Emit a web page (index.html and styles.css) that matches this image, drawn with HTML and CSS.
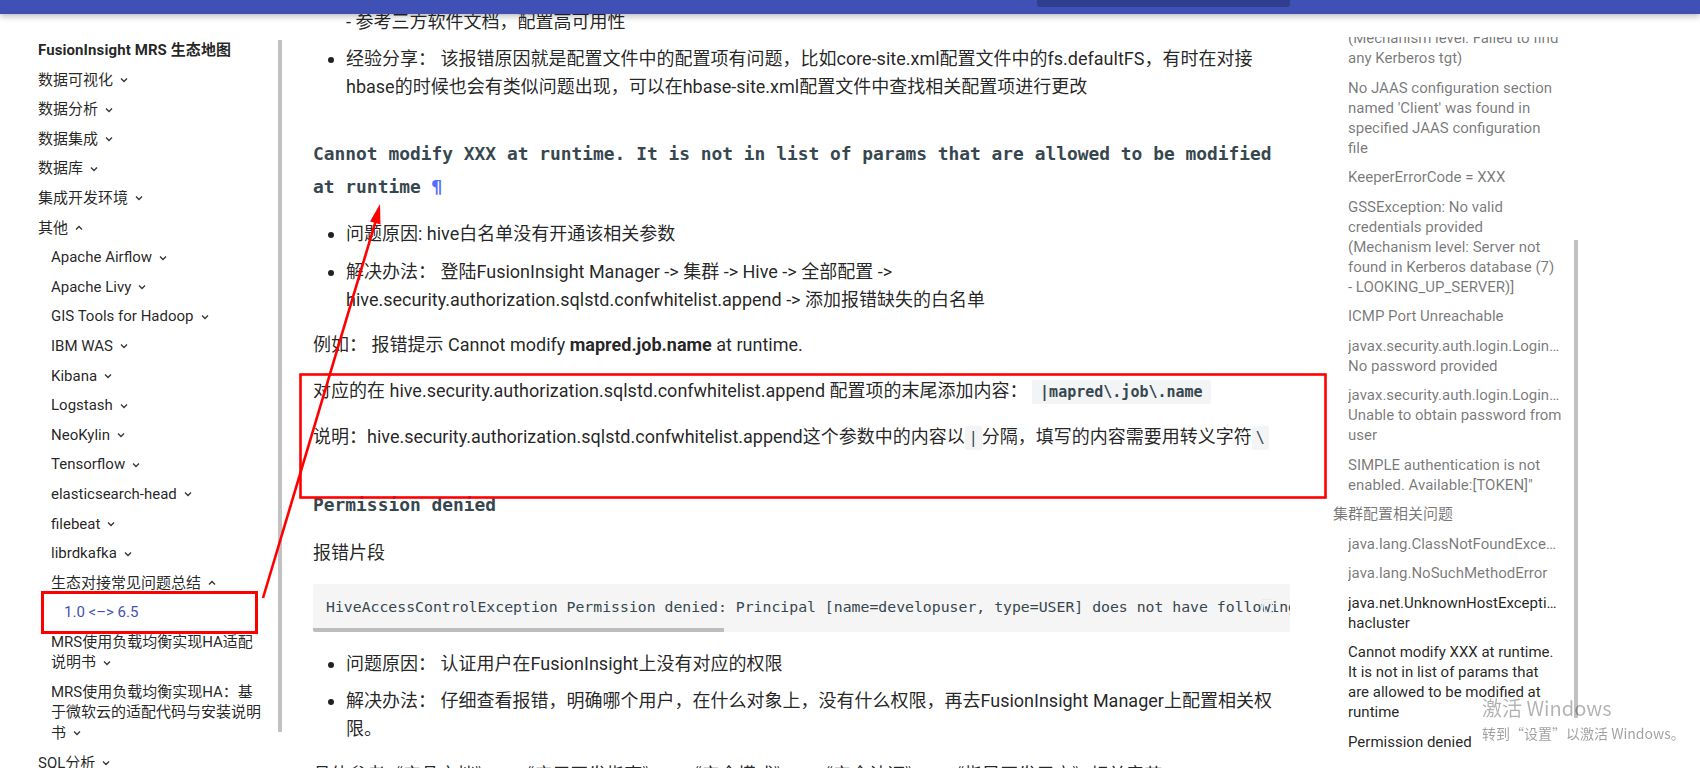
FILE: index.html
```html
<!DOCTYPE html>
<html lang="zh-CN">
<head>
<meta charset="utf-8">
<title>FusionInsight MRS 生态地图</title>
<link rel="stylesheet" href="styles.css">
</head>
<body>
<header class="header"><div class="search"></div></header>

<div class="layout">
  <aside class="sidebar">
    <nav class="nav">
      <div class="nav-title">FusionInsight MRS 生态地图</div>
      <ul class="nav-list">
        <li>数据可视化<svg class="chev" viewBox="0 0 10 10"><polyline points="2,3.5 5,6.5 8,3.5"/></svg></li>
        <li>数据分析<svg class="chev" viewBox="0 0 10 10"><polyline points="2,3.5 5,6.5 8,3.5"/></svg></li>
        <li>数据集成<svg class="chev" viewBox="0 0 10 10"><polyline points="2,3.5 5,6.5 8,3.5"/></svg></li>
        <li>数据库<svg class="chev" viewBox="0 0 10 10"><polyline points="2,3.5 5,6.5 8,3.5"/></svg></li>
        <li>集成开发环境<svg class="chev" viewBox="0 0 10 10"><polyline points="2,3.5 5,6.5 8,3.5"/></svg></li>
        <li>其他<svg class="chev" viewBox="0 0 10 10"><polyline points="2,6.5 5,3.5 8,6.5"/></svg>
          <ul class="nav-list nav-sub">
            <li>Apache Airflow<svg class="chev" viewBox="0 0 10 10"><polyline points="2,3.5 5,6.5 8,3.5"/></svg></li>
            <li>Apache Livy<svg class="chev" viewBox="0 0 10 10"><polyline points="2,3.5 5,6.5 8,3.5"/></svg></li>
            <li>GIS Tools for Hadoop<svg class="chev" viewBox="0 0 10 10"><polyline points="2,3.5 5,6.5 8,3.5"/></svg></li>
            <li>IBM WAS<svg class="chev" viewBox="0 0 10 10"><polyline points="2,3.5 5,6.5 8,3.5"/></svg></li>
            <li>Kibana<svg class="chev" viewBox="0 0 10 10"><polyline points="2,3.5 5,6.5 8,3.5"/></svg></li>
            <li>Logstash<svg class="chev" viewBox="0 0 10 10"><polyline points="2,3.5 5,6.5 8,3.5"/></svg></li>
            <li>NeoKylin<svg class="chev" viewBox="0 0 10 10"><polyline points="2,3.5 5,6.5 8,3.5"/></svg></li>
            <li>Tensorflow<svg class="chev" viewBox="0 0 10 10"><polyline points="2,3.5 5,6.5 8,3.5"/></svg></li>
            <li>elasticsearch-head<svg class="chev" viewBox="0 0 10 10"><polyline points="2,3.5 5,6.5 8,3.5"/></svg></li>
            <li>filebeat<svg class="chev" viewBox="0 0 10 10"><polyline points="2,3.5 5,6.5 8,3.5"/></svg></li>
            <li>librdkafka<svg class="chev" viewBox="0 0 10 10"><polyline points="2,3.5 5,6.5 8,3.5"/></svg></li>
            <li>生态对接常见问题总结<svg class="chev" viewBox="0 0 10 10"><polyline points="2,6.5 5,3.5 8,6.5"/></svg>
              <ul class="nav-list nav-sub">
                <li class="active">1.0 &lt;–&gt; 6.5</li>
              </ul>
            </li>
            <li>MRS使用负载均衡实现HA适配说明书<svg class="chev" viewBox="0 0 10 10"><polyline points="2,3.5 5,6.5 8,3.5"/></svg></li>
            <li>MRS使用负载均衡实现HA：基于微软云的适配代码与安装说明书<svg class="chev" viewBox="0 0 10 10"><polyline points="2,3.5 5,6.5 8,3.5"/></svg></li>
          </ul>
        </li>
        <li>SQL分析<svg class="chev" viewBox="0 0 10 10"><polyline points="2,3.5 5,6.5 8,3.5"/></svg></li>
      </ul>
    </nav>
    <div class="nav-thumb"></div>
  </aside>

  <main class="content">
    <ul class="list first">
      <li class="cont">- 参考三方软件文档，配置高可用性</li>
      <li>经验分享： 该报错原因就是配置文件中的配置项有问题，比如core-site.xml配置文件中的fs.defaultFS，有时在对接hbase的时候也会有类似问题出现，可以在hbase-site.xml配置文件中查找相关配置项进行更改</li>
    </ul>

    <h3 class="heading">Cannot modify XXX at runtime. It is not in list of params that are allowed to be modified at runtime <span class="pilcrow">¶</span></h3>

    <ul class="list">
      <li>问题原因: hive白名单没有开通该相关参数</li>
      <li>解决办法： 登陆FusionInsight Manager -&gt; 集群 -&gt; Hive -&gt; 全部配置 -&gt; hive.security.authorization.sqlstd.confwhitelist.append -&gt; 添加报错缺失的白名单</li>
    </ul>

    <p>例如： 报错提示 Cannot modify <strong>mapred.job.name</strong> at runtime.</p>
    <p>对应的在 hive.security.authorization.sqlstd.confwhitelist.append 配置项的末尾添加内容： <code class="code-wide">|mapred\.job\.name</code></p>
    <p>说明：hive.security.authorization.sqlstd.confwhitelist.append这个参数中的内容以<code>|</code>分隔，填写的内容需要用转义字符<code>\</code></p>

    <h3 class="heading">Permission denied</h3>

    <p>报错片段</p>
    <pre class="codeblock">HiveAccessControlException Permission denied: Principal [name=developuser, type=USER] does not have following privileges for operation QUERY [[SELECT] on Object [type=TABLE_OR_VIEW, name=default.t1]]<svg class="copy" viewBox="0 0 16 16"><rect x="4.5" y="4.5" width="9" height="10"/><path d="M2.5 11.5V1.5h9"/></svg></pre>

    <ul class="list">
      <li>问题原因： 认证用户在FusionInsight上没有对应的权限</li>
      <li>解决办法： 仔细查看报错，明确哪个用户，在什么对象上，没有什么权限，再去FusionInsight Manager上配置相关权限。</li>
    </ul>

    <p>具体参考《产品文档》 -&gt; 《应用开发指南》 -&gt; 《安全模式》 -&gt; 《安全认证》 -&gt; 《指导开发用户》相关章节</p>
  </main>

  <aside class="toc">
    <ul class="toc-list toc-top">
      <li class="toc-cat">
        <ul class="toc-list toc-sub">
          <li><a class="passed">GSSException: No valid credentials provided (Mechanism level: Failed to find any Kerberos tgt)</a></li>
          <li><a class="passed">No JAAS configuration section named 'Client' was found in specified JAAS configuration file</a></li>
          <li><a class="passed">KeeperErrorCode = XXX</a></li>
          <li><a class="passed">GSSException: No valid credentials provided (Mechanism level: Server not found in Kerberos database (7) - LOOKING_UP_SERVER)]</a></li>
          <li><a class="passed">ICMP Port Unreachable</a></li>
          <li><a class="passed">javax.security.auth.login.LoginException: No password provided</a></li>
          <li><a class="passed">javax.security.auth.login.LoginException: Unable to obtain password from user</a></li>
          <li><a class="passed">SIMPLE authentication is not enabled. Available:[TOKEN]"</a></li>
        </ul>
      </li>
      <li class="toc-cat"><a class="passed">集群配置相关问题</a>
        <ul class="toc-list toc-sub">
          <li><a class="passed">java.lang.ClassNotFoundException</a></li>
          <li><a class="passed">java.lang.NoSuchMethodError</a></li>
          <li><a>java.net.UnknownHostException: hacluster</a></li>
          <li><a>Cannot modify XXX at runtime. It is not in list of params that are allowed to be modified at runtime</a></li>
          <li><a>Permission denied</a></li>
        </ul>
      </li>
    </ul>
    <div class="toc-thumb"></div>
  </aside>
</div>

<div class="watermark">
  <div class="wm-title">激活 Windows</div>
  <div class="wm-sub">转到“设置”以激活 Windows。</div>
</div>

<svg class="annot" width="1700" height="768" viewBox="0 0 1700 768">
  <rect x="42.5" y="592.5" width="214" height="40" fill="none" stroke="#ff0000" stroke-width="3"/>
  <rect x="300.5" y="374.5" width="1025" height="123" fill="none" stroke="#ff0000" stroke-width="2.6"/>
  <line x1="263" y1="598" x2="376" y2="220" stroke="#ff0000" stroke-width="2.6"/>
  <polygon points="380,204 380.5,224.5 370,221.5" fill="#ff0000"/>
</svg>
</body>
</html>
```

FILE: styles.css
```css
* { box-sizing: border-box; }

body {
  margin: 0;
  font-family: Roboto, "Noto Sans CJK SC", sans-serif;
  color: rgba(0, 0, 0, 0.87);
  background: #fff;
  overflow: hidden;
  height: 768px;
}

/* ---------- header ---------- */
.header {
  position: fixed;
  top: 0;
  left: 0;
  right: 0;
  height: 14px;
  background: #3f51b5;
  box-shadow: 0 0 3px rgba(0, 0, 0, 0.1), 0 3px 6px rgba(0, 0, 0, 0.22);
  z-index: 10;
}
.search {
  position: absolute;
  left: 1037px;
  top: 0;
  width: 253px;
  height: 7px;
  background: #303e8e;
  border-radius: 0 0 3px 3px;
}

/* ---------- layout ---------- */
.layout {
  display: flex;
  height: 768px;
}

/* ---------- left nav ---------- */
.sidebar {
  position: relative;
  flex: none;
  width: 283px;
  height: 768px;
  overflow: hidden;
  padding-top: 40px;
}
.nav {
  margin-left: 38px;
  width: 225px;
  font-size: 15px;
  line-height: 20.5px;
  color: rgba(0, 0, 0, 0.87);
}
.nav-title {
  font-weight: 700;
  letter-spacing: 0.1px;
}
.nav-list {
  list-style: none;
  margin: 0;
  padding: 0;
}
.nav-list li {
  margin-top: 9.1px;
}
.nav-sub {
  padding-left: 13px;
}
.nav-list li.active {
  color: #3f51b5;
}
.chev {
  width: 10px;
  height: 10px;
  margin-left: 6px;
  vertical-align: -0.5px;
  fill: none;
  stroke: #333;
  stroke-width: 1.3;
}
.nav-thumb {
  position: absolute;
  left: 278px;
  top: 40px;
  width: 4px;
  height: 692px;
  background: #c1c1c1;
}

/* ---------- content ---------- */
.content {
  flex: none;
  width: 977px;
  margin-left: 30px;
  padding-top: 8px;
  font-size: 18px;
  line-height: 28px;
}
.list {
  margin: 17.6px 0;
  padding-left: 33px;
}
.list.first {
  margin-top: 0;
}
.list li {
  margin-top: 9.3px;
}
.list li:first-child {
  margin-top: 0;
}
.list li.cont {
  list-style: none;
}
.content p {
  margin: 17.6px 0;
}
.heading {
  margin: 35.5px 0 17.6px;
  font-family: "DejaVu Sans Mono", monospace;
  font-size: 17.9px;
  font-weight: 700;
  line-height: 33px;
  color: #37474f;
}
.pilcrow {
  color: #536dfe;
}
code {
  font-family: "DejaVu Sans Mono", monospace;
  font-size: 15px;
  color: #37474f;
  background: #f3f4f5;
  padding: 3px 4px;
  border-radius: 2px;
}
.code-wide {
  padding: 3px 8px;
  font-weight: 700;
}
.codeblock {
  position: relative;
  margin: 17px 0;
  padding: 12px 13px 14px;
  background: #f5f5f5;
  font-family: "DejaVu Sans Mono", monospace;
  font-size: 14.8px;
  line-height: 22px;
  color: #37474f;
  white-space: pre;
  overflow: hidden;
  border-radius: 2px;
}
.codeblock::after {
  content: "";
  position: absolute;
  left: 0;
  bottom: 0;
  width: 411px;
  height: 4px;
  background: #bdbdbd;
}
.copy {
  position: absolute;
  right: 14px;
  top: 14px;
  width: 16px;
  height: 16px;
  fill: none;
  stroke: #ebebeb;
  stroke-width: 1.2;
}

/* ---------- toc ---------- */
.toc {
  position: relative;
  flex: none;
  width: 250px;
  margin-left: 43px;
  margin-top: 37px;
  height: 731px;
  overflow: hidden;
  font-size: 15px;
  line-height: 20px;
}
.toc-list {
  list-style: none;
  margin: 0;
  padding: 0;
}
.toc-top {
  margin-top: -58.5px;
}
.toc-list li {
  margin-top: 9.5px;
}
.toc-sub {
  padding-left: 15px;
}
.toc a {
  display: block;
  width: 214px;
  overflow: hidden;
  text-overflow: ellipsis;
  color: rgba(0, 0, 0, 0.87);
}
.toc a.passed {
  color: rgba(0, 0, 0, 0.54);
}
.toc-thumb {
  position: absolute;
  left: 241px;
  top: 203px;
  width: 4px;
  height: 478px;
  background: #c1c1c1;
}

/* ---------- overlays ---------- */
.watermark {
  position: fixed;
  left: 1482px;
  top: 696px;
  color: rgba(0, 0, 0, 0.3);
  font-family: "Noto Sans CJK SC", sans-serif;
  z-index: 20;
}
.wm-title {
  font-size: 20px;
  line-height: 24px;
}
.wm-sub {
  margin-top: 4px;
  font-size: 14px;
  line-height: 18px;
  color: rgba(0, 0, 0, 0.38);
}
.annot {
  position: absolute;
  left: 0;
  top: 0;
  pointer-events: none;
  z-index: 30;
}
```
